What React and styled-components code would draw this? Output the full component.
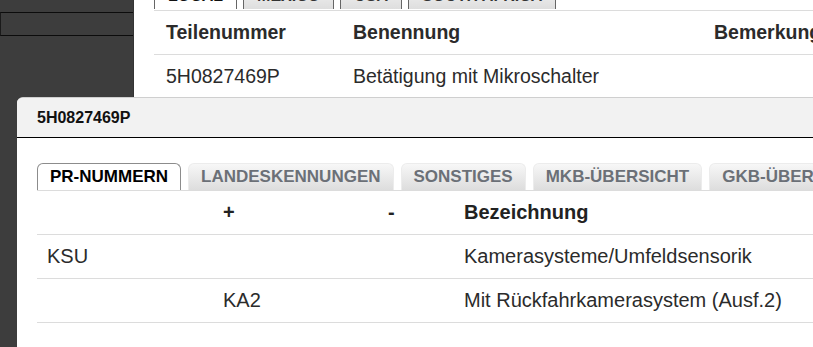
import React from "react";
import styled, { createGlobalStyle } from "styled-components";

const Global = createGlobalStyle`
  html, body { margin: 0; padding: 0; background: #fff; overflow: hidden; }
  body { font-family: "Liberation Sans", Arial, sans-serif; }
  #root { width: 813px; height: 347px; position: relative; overflow: hidden; }
`;

const Page = styled.div`
  display: flex;
  height: 347px;
`;

const Sidebar = styled.aside`
  width: 134px;
  flex: none;
  background: #3d3d3d;
  border-right: 1px solid #343434;
  box-sizing: border-box;
  padding-top: 12px;
`;

const SideField = styled.div`
  height: 22px;
  border-top: 1px solid #0c0c0c;
  border-bottom: 1px solid #0c0c0c;
  border-left: 1px solid #1a1a1a;
  background: #3d3d3d;
`;

const Main = styled.main`
  flex: 1;
  padding-left: 20px;
  min-width: 0;
`;

const TopTabs = styled.div`
  display: flex;
  gap: 6px;
  margin-top: -18px;
  border-bottom: 1px solid #dcdcdc;
  padding-bottom: 1px;
`;

const TopTab = styled.div`
  height: 26px;
  padding: 0 13px;
  display: flex;
  align-items: center;
  font-size: 16px;
  font-weight: bold;
  color: ${p => (p.$active ? "#111" : "#333")};
  background: ${p => (p.$active ? "#fff" : "linear-gradient(#f6f6f6, #dedede)")};
  border: 1px solid #666;
  border-bottom: none;
  border-radius: 4px 4px 0 0;
  white-space: nowrap;
`;

const UpperRow = styled.div`
  display: grid;
  grid-template-columns: 187px 361px 1fr;
  height: 43px;
  align-items: center;
  border-bottom: 1px solid #dcdcdc;
  font-size: 19.5px;
  color: #2b2b2b;
  font-weight: ${p => (p.$head ? "bold" : "normal")};
  white-space: nowrap;
`;

const UpperCell = styled.div`
  padding-left: 12px;
`;

const Dialog = styled.section`
  position: absolute;
  left: 17px;
  top: 97px;
  width: 900px;
  bottom: 0;
  background: #fff;
  border-top: 1px solid #cfcfcf;
  border-radius: 6px 0 0 0;
  overflow: hidden;
`;

const DialogHeader = styled.header`
  height: 39px;
  background: #f2f2f2;
  border-bottom: 1px solid #000;
  display: flex;
  align-items: center;
  padding-left: 20px;
  font-size: 16px;
  font-weight: bold;
  color: #111;
`;

const DialogBody = styled.div`
  padding: 25px 0 0 20px;
`;

const Tabs = styled.div`
  display: flex;
  gap: 7px;
  border-bottom: 1px solid #dcdcdc;
`;

const Tab = styled.div`
  height: 26px;
  padding: 0 12px;
  display: flex;
  align-items: center;
  font-size: 17px;
  font-weight: bold;
  white-space: nowrap;
  border-radius: 6px 6px 0 0;
  color: ${p => (p.$active ? "#000" : "#6b7077")};
  background: ${p => (p.$active ? "#fff" : "linear-gradient(#f7f7f7, #dddddd)")};
  border: 1px solid ${p => (p.$active ? "#8c8c8c" : "#ececec")};
  border-bottom: none;
`;

const Row = styled.div`
  display: grid;
  grid-template-columns: 176px 165px 76px 1fr;
  height: 43px;
  align-items: center;
  border-bottom: 1px solid #dcdcdc;
  font-size: 20px;
  color: ${p => (p.$head ? "#222" : "#2b2b2b")};
  font-weight: ${p => (p.$head ? "bold" : "normal")};
  white-space: nowrap;
`;

const Cell = styled.div`
  padding-left: 10px;
`;

const tabs = [
  { label: "PR-NUMMERN", active: true },
  { label: "LANDESKENNUNGEN" },
  { label: "SONSTIGES" },
  { label: "MKB-ÜBERSICHT" },
  { label: "GKB-ÜBERSICHT" },
];

const rows = [
  ["KSU", "", "", "Kamerasysteme/Umfeldsensorik"],
  ["", "KA2", "", "Mit Rückfahrkamerasystem (Ausf.2)"],
];

export default function App() {
  return (
    <>
      <Global />
      <Page>
        <Sidebar>
          <SideField />
        </Sidebar>
        <Main>
          <TopTabs>
            <TopTab $active>LOCAL</TopTab>
            <TopTab>MEXICO</TopTab>
            <TopTab>USA</TopTab>
            <TopTab>SOUTH AFRICA</TopTab>
          </TopTabs>
          <UpperRow $head>
            <UpperCell>Teilenummer</UpperCell>
            <UpperCell>Benennung</UpperCell>
            <UpperCell>Bemerkung</UpperCell>
          </UpperRow>
          <UpperRow>
            <UpperCell>5H0827469P</UpperCell>
            <UpperCell>Betätigung mit Mikroschalter</UpperCell>
            <UpperCell></UpperCell>
          </UpperRow>
        </Main>
      </Page>
      <Dialog>
        <DialogHeader>5H0827469P</DialogHeader>
        <DialogBody>
          <Tabs>
            {tabs.map(t => (
              <Tab key={t.label} $active={t.active}>
                {t.label}
              </Tab>
            ))}
          </Tabs>
          <Row $head>
            <Cell></Cell>
            <Cell>+</Cell>
            <Cell>-</Cell>
            <Cell>Bezeichnung</Cell>
          </Row>
          {rows.map((r, i) => (
            <Row key={i}>
              {r.map((c, j) => (
                <Cell key={j}>{c}</Cell>
              ))}
            </Row>
          ))}
        </DialogBody>
      </Dialog>
    </>
  );
}
